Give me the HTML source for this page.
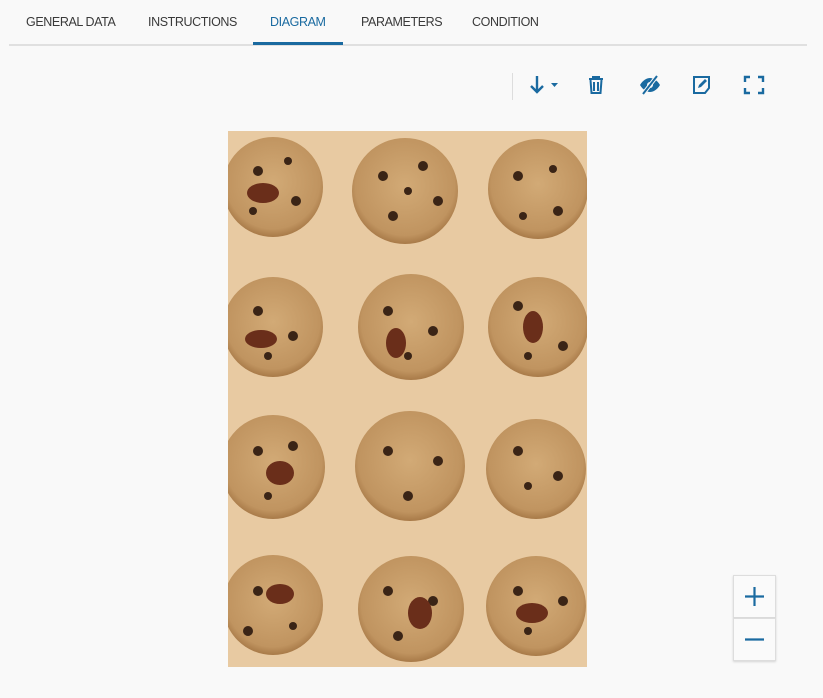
<!DOCTYPE html>
<html><head><style>
body{margin:0;width:823px;height:698px;background:#f9f9f9;font-family:"Liberation Sans",sans-serif;position:relative;overflow:hidden}
.tabs{position:absolute;left:9px;top:0;width:798px;height:44px;border-bottom:2px solid #e0e0e0}
.tab{position:absolute;top:15px;font-size:12.5px;color:#3a3a3a;letter-spacing:-0.4px}
.act{color:#1a6aa0}
.bar{position:absolute;left:253px;top:42px;width:90px;height:3px;background:#1a6aa0}
.sep{position:absolute;left:512px;top:73px;width:1px;height:27px;background:#ddd}
svg.i{position:absolute}
.img{position:absolute;left:228px;top:131px;width:359px;height:536px;background:#e8caa2;overflow:hidden}
.zb{position:absolute;left:733px;width:41px;height:41px;background:#fafafa;border:1px solid #ddd;box-shadow:0 1px 2px rgba(0,0,0,.15)}
</style></head><body>
<div class="tabs"></div>
<div class="tab" style="left:26px">GENERAL DATA</div>
<div class="tab" style="left:148px">INSTRUCTIONS</div>
<div class="tab act" style="left:270px">DIAGRAM</div>
<div class="tab" style="left:361px">PARAMETERS</div>
<div class="tab" style="left:472px">CONDITION</div>
<div class="bar"></div>
<div class="sep"></div>
<svg class="i" style="left:527px;top:74px" width="36" height="22" viewBox="0 0 36 22"><path d="M10 2v16M4 12l6 6 6-6" stroke="#1a6aa0" stroke-width="2.4" fill="none"/><path d="M24 9h7l-3.5 4z" fill="#1a6aa0"/></svg>
<svg class="i" style="left:586px;top:74px" width="20" height="22" viewBox="0 0 20 22"><path d="M3 5h14M7 5V3h6v2M4.5 6l1 13h9l1-13M8 8v9M12 8v9" stroke="#1a6aa0" stroke-width="2" fill="none"/></svg>
<svg class="i" style="left:638px;top:74px" width="24" height="22" viewBox="0 0 24 22"><path d="M2 11c3-5 7-7 10-7s7 2 10 7c-3 5-7 7-10 7s-7-2-10-7z" fill="#1a6aa0"/><circle cx="12" cy="11" r="3" fill="#f9f9f9"/><path d="M5 20L19 2" stroke="#f9f9f9" stroke-width="4"/><path d="M5 20L19 2" stroke="#1a6aa0" stroke-width="2"/></svg>
<svg class="i" style="left:691px;top:74px" width="22" height="22" viewBox="0 0 22 22"><path d="M3 3h15v11l-4 5H3z" stroke="#1a6aa0" stroke-width="2" fill="none"/><path d="M7 14l1-3 6-6 2 2-6 6z" fill="#1a6aa0"/></svg>
<svg class="i" style="left:743px;top:74px" width="22" height="22" viewBox="0 0 22 22"><path d="M2 8V3h5M15 3h5v5M20 14v5h-5M7 19H2v-5" stroke="#1a6aa0" stroke-width="2.4" fill="none"/></svg>
<div class="img"><svg width="359" height="536">
<defs><radialGradient id="c" cx="50%" cy="45%" r="55%"><stop offset="0" stop-color="#d2aa76"/><stop offset=".85" stop-color="#c09460"/><stop offset="1" stop-color="#a87a48"/></radialGradient></defs>
<g fill="url(#c)">
<circle cx="45" cy="56" r="50"/><circle cx="177" cy="60" r="53"/><circle cx="310" cy="58" r="50"/>
<circle cx="45" cy="196" r="50"/><circle cx="183" cy="196" r="53"/><circle cx="310" cy="196" r="50"/>
<circle cx="45" cy="336" r="52"/><circle cx="182" cy="335" r="55"/><circle cx="308" cy="338" r="50"/>
<circle cx="45" cy="474" r="50"/><circle cx="183" cy="478" r="53"/><circle cx="308" cy="475" r="50"/>
</g>
<g fill="#3a2416">
<circle cx="30" cy="40" r="5"/><circle cx="60" cy="30" r="4"/><circle cx="68" cy="70" r="5"/><circle cx="25" cy="80" r="4"/>
<circle cx="155" cy="45" r="5"/><circle cx="195" cy="35" r="5"/><circle cx="210" cy="70" r="5"/><circle cx="165" cy="85" r="5"/><circle cx="180" cy="60" r="4"/>
<circle cx="290" cy="45" r="5"/><circle cx="325" cy="38" r="4"/><circle cx="330" cy="80" r="5"/><circle cx="295" cy="85" r="4"/>
<circle cx="30" cy="180" r="5"/><circle cx="65" cy="205" r="5"/><circle cx="40" cy="225" r="4"/>
<circle cx="160" cy="180" r="5"/><circle cx="205" cy="200" r="5"/><circle cx="180" cy="225" r="4"/>
<circle cx="290" cy="175" r="5"/><circle cx="335" cy="215" r="5"/><circle cx="300" cy="225" r="4"/>
<circle cx="30" cy="320" r="5"/><circle cx="65" cy="315" r="5"/><circle cx="40" cy="365" r="4"/>
<circle cx="160" cy="320" r="5"/><circle cx="210" cy="330" r="5"/><circle cx="180" cy="365" r="5"/>
<circle cx="290" cy="320" r="5"/><circle cx="330" cy="345" r="5"/><circle cx="300" cy="355" r="4"/>
<circle cx="30" cy="460" r="5"/><circle cx="20" cy="500" r="5"/><circle cx="65" cy="495" r="4"/>
<circle cx="160" cy="460" r="5"/><circle cx="205" cy="470" r="5"/><circle cx="170" cy="505" r="5"/>
<circle cx="290" cy="460" r="5"/><circle cx="335" cy="470" r="5"/><circle cx="300" cy="500" r="4"/>
</g>
<g fill="#6a2e1a">
<ellipse cx="35" cy="62" rx="16" ry="10"/><ellipse cx="168" cy="212" rx="10" ry="15"/><ellipse cx="305" cy="196" rx="10" ry="16"/>
<ellipse cx="33" cy="208" rx="16" ry="9"/><ellipse cx="52" cy="342" rx="14" ry="12"/><ellipse cx="52" cy="463" rx="14" ry="10"/>
<ellipse cx="192" cy="482" rx="12" ry="16"/><ellipse cx="304" cy="482" rx="16" ry="10"/>
</g>
</svg></div>
<div class="zb" style="top:575px"><svg width="41" height="41"><path d="M20.5 11v19M11 20.5h19" stroke="#1a6aa0" stroke-width="2.2"/></svg></div>
<div class="zb" style="top:618px"><svg width="41" height="41"><path d="M11 20.5h19" stroke="#1a6aa0" stroke-width="2.2"/></svg></div>
</body></html>
